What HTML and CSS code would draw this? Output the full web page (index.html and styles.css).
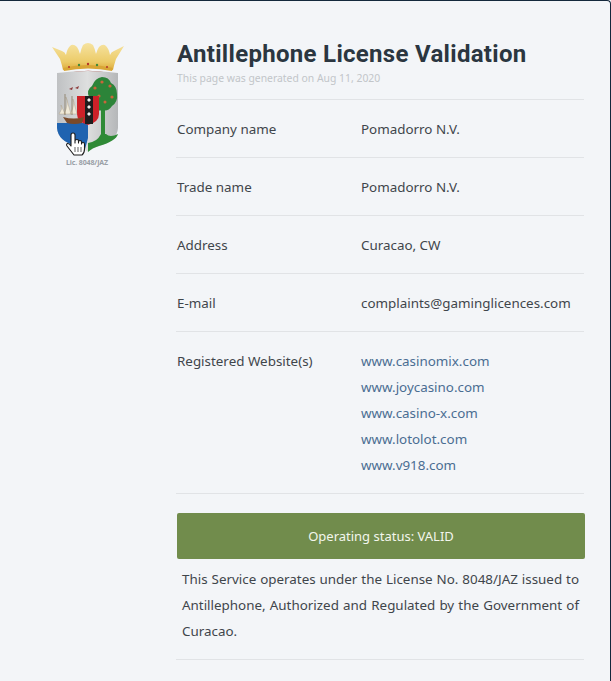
FILE: index.html
```html
<!DOCTYPE html>
<html lang="en">
<head>
<meta charset="utf-8">
<title>Antillephone License Validation</title>
<link rel="stylesheet" href="styles.css">
</head>
<body>
<div class="page">
  <aside class="seal">
    <svg class="crest" width="72" height="114" viewBox="0 0 72 114" aria-hidden="true">
      <defs>
        <linearGradient id="gold" x1="0" y1="0" x2="0" y2="1"><stop offset="0" stop-color="#f6e3a0"/><stop offset=".7" stop-color="#eccb68"/><stop offset="1" stop-color="#dca93a"/></linearGradient>
        <linearGradient id="shield" x1="0" y1="0" x2="1" y2="0"><stop offset="0" stop-color="#bfc1c3"/><stop offset=".5" stop-color="#dedfdf"/><stop offset="1" stop-color="#b5b7b9"/></linearGradient>
      </defs>
      <path d="M0 5 L10 9 Q13 10 14 13 Q15 7 18 4 Q21 1 25 5 Q27 8 28 12 Q29 7 31 3 Q36 -1 41 3 Q43 7 44 12 Q45 8 47 5 Q51 1 54 4 Q57 7 58 13 Q59 10 62 9 L72 4 L64 17 Q62 23 61 28 Q36 22 11 28 Q10 23 8 17 Z" fill="url(#gold)"/>
      <path d="M11 26 Q36 20 61 26 L60 29 Q36 24 12 29 Z" fill="#d9a636"/>
      <path d="M13 32 Q36 27 60 32" fill="none" stroke="#a8352a" stroke-width="1.6"/>
      <circle cx="27" cy="23" r="1.200" fill="#3f8a3a"/><circle cx="36" cy="22" r="1.200" fill="#b5342a"/><circle cx="45" cy="23" r="1.200" fill="#3f8a3a"/><circle cx="17" cy="25" r="1" fill="#b5342a"/><circle cx="55" cy="25" r="1" fill="#b5342a"/>
      <path d="M5 31 Q36 27 66 31 L66 86 Q65 99 47 104 Q40 106 36 110 Q32 106 24 104 Q6 99 5 86 Z" fill="url(#shield)"/>
      <path d="M5 81 H36 L36 96 Q34 104 33 107 Q29 104 24 104 Q6 99 5 86 Z" fill="#1f63b0"/>
      <path d="M36 110 L36 101 Q45 100 49 92 H54 Q58 96 66 92 Q64 99 47 104 Q40 106 36 110 Z" fill="#2f8a36"/>
      <rect x="49" y="66" width="4" height="30" fill="#2f8a36"/>
      <path d="M50 35 Q57 35 59 41 Q65 44 65 52 Q66 60 60 64 Q56 70 50 68 Q45 70 42 65 Q36 62 37 55 Q34 48 40 44 Q43 36 50 35 Z" fill="#2c8439"/>
      <g fill="#c9653a"><circle cx="43" cy="46" r="1.600"/><circle cx="50" cy="40" r="1.600"/><circle cx="58" cy="44" r="1.600"/><circle cx="47" cy="54" r="1.600"/><circle cx="60" cy="55" r="1.600"/><circle cx="41" cy="57" r="1.500"/><circle cx="53" cy="60" r="1.500"/></g>
      <path d="M25 54 H47 V72 Q47 80 36 83 Q25 80 25 72 Z" fill="#cc2128"/>
      <rect x="33" y="54" width="8" height="28" fill="#1d1d1d"/>
      <g fill="#f1f1f1"><path d="M35 58 l2 2 l2 -2 l-2 -2 Z"/><path d="M35 65 l2 2 l2 -2 l-2 -2 Z"/><path d="M35 72 l2 2 l2 -2 l-2 -2 Z"/></g>
      <path d="M11 75 Q22 78 32 75 L30 81 Q22 83 15 81 Z" fill="#7a4a2a"/>
      <path d="M7 72 Q11 67 9 63 L13 72 Z M12 72 Q17 62 14 55 L19 72 Z M18 72 Q23 64 21 57 L25 72 Z" fill="#efe9d8" stroke="#a89a80" stroke-width=".4"/>
      <path d="M13 73 V52 M20 73 V54" stroke="#6f5a3a" stroke-width=".6"/>
      <path d="M17 47 l4 -2 l-1 3 Z M23 46 l4 -2 l-1 3 Z" fill="#8c3a3a"/>
      <path d="M19 93 Q19 91 21 91 Q23 91 23 93 V101 V99 Q23 97.500 25 97.500 Q26.500 97.500 26.500 99 V101 V100 Q26.500 98.500 28 98.500 Q29.500 98.500 29.500 100 V102 Q29.500 100.500 31 100.500 Q32.500 100.500 32.500 102 V107 Q32.500 111 30 113 H22 L15 104 Q14 102 15.500 101.500 Q17 101 19 104 Z" fill="#fff" stroke="#1c1c1c" stroke-width="1.100" stroke-linejoin="round"/>
      <path d="M23 105 V110 M26 105 V110 M29 105 V110" stroke="#1c1c1c" stroke-width=".7"/>
    </svg>
    <p class="lic">Lic. 8048/JAZ</p>
  </aside>
  <main class="content">
    <header class="head">
      <h1 class="title">Antillephone License Validation</h1>
      <p class="generated">This page was generated on Aug 11, 2020</p>
    </header>
    <dl class="details">
      <div class="row"><dt>Company name</dt><dd>Pomadorro N.V.</dd></div>
      <div class="row"><dt>Trade name</dt><dd>Pomadorro N.V.</dd></div>
      <div class="row"><dt>Address</dt><dd>Curacao, CW</dd></div>
      <div class="row"><dt>E-mail</dt><dd>complaints@gaminglicences.com</dd></div>
      <div class="row"><dt>Registered Website(s)</dt><dd class="sites">
        <a href="#">www.casinomix.com</a>
        <a href="#">www.joycasino.com</a>
        <a href="#">www.casino-x.com</a>
        <a href="#">www.lotolot.com</a>
        <a href="#">www.v918.com</a>
      </dd></div>
    </dl>
    <section class="status">
      <div class="status-bar">Operating status: VALID</div>
      <p class="statement">This Service operates under the License No. 8048/JAZ issued to Antillephone, Authorized and Regulated by the Government of Curacao.</p>
    </section>
  </main>
</div>
</body>
</html>
```
FILE: styles.css
```css
html, body { margin: 0; padding: 0; height: 100%; overflow: hidden; }
body { background: #f3f5f8; font-family: "Noto Sans", sans-serif; color: #3f454b; }
.page { box-sizing: border-box; height: 681px; border-top: 1px solid #14283c; border-right: 1px solid #14283c; border-radius: 0 4px 0 0; display: flex; }
.seal { width: 176px; flex: none; box-sizing: border-box; padding: 41px 0 0 52px; }
.crest { display: block; }
.lic { margin: 2px 0 0 -1px; width: 72px; text-align: center; font-size: 7px; line-height: 10px; font-weight: 700; color: #9aa0a7; letter-spacing: -0.12px; }
.content { width: 408px; flex: none; }
.head { box-sizing: border-box; height: 99px; padding: 39px 0 0 1px; border-bottom: 1px solid #e1e3e6; }
.title { margin: 0; font-family: "Roboto", sans-serif; font-size: 24px; line-height: 28px; font-weight: 700; color: #2b3640; letter-spacing: 0.3px; }
.generated { margin: 3px 0 0; font-size: 10.400px; line-height: 14px; color: #c2c5c9; }
.details { margin: 0; }
.row { display: flex; box-sizing: border-box; padding: 16px 0 15px 1px; border-bottom: 1px solid #e1e3e6; font-size: 13.400px; line-height: 26px; }
.row dt { width: 184px; flex: none; }
.row dd { margin: 0; }
.sites { display: flex; flex-direction: column; }
.sites a { color: #4a6d92; text-decoration: none; }
.status { padding: 19px 0 15px 1px; border-bottom: 1px solid #e1e3e6; }
.status-bar { height: 46px; margin-right: -1px; background: #718c4c; color: #f3f6ec; border-radius: 2px; display: flex; align-items: center; justify-content: center; font-size: 13px; }
.statement { margin: 7px 5px 0; font-size: 13.400px; line-height: 26px; text-align: justify; }
```
